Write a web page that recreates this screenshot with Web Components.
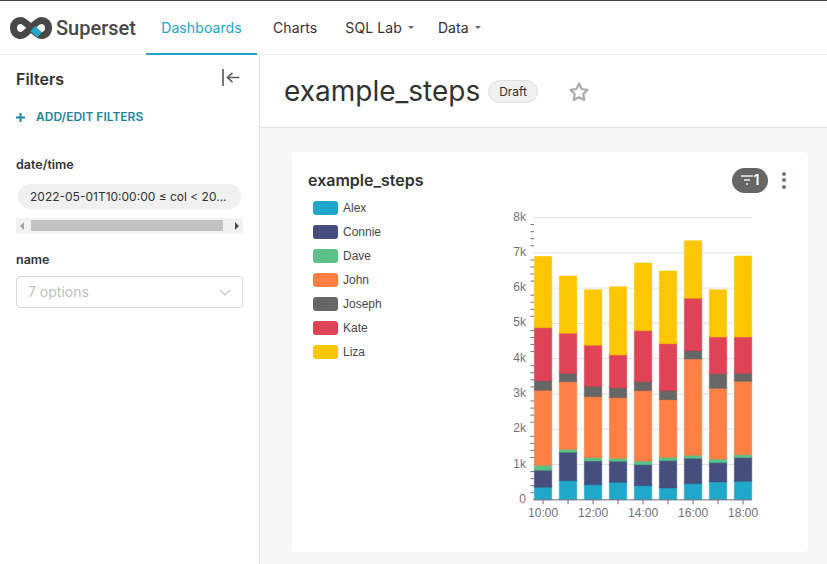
<!DOCTYPE html>
<html lang="en"><head><meta charset="utf-8"><title>example_steps</title>
<style>
html,body{margin:0;padding:0;width:827px;height:564px;overflow:hidden;background:#fff;font-family:Inter,"Liberation Sans",sans-serif;color:#323232}
</style></head><body>
<ss-app>
  <ss-header slot="header">
    <ss-nav active>Dashboards</ss-nav>
    <ss-nav>Charts</ss-nav>
    <ss-nav caret>SQL Lab</ss-nav>
    <ss-nav caret>Data</ss-nav>
  </ss-header>
  <ss-sidebar slot="side"></ss-sidebar>
  <ss-dash-header slot="head">example_steps</ss-dash-header>
  <ss-card slot="main" title-text="example_steps">
    <ss-legend slot="legend"></ss-legend>
    <ss-bars slot="chart"></ss-bars>
  </ss-card>
</ss-app>
<script>
function def(name, html, init){
  customElements.define(name, class extends HTMLElement{
    constructor(){super();this.attachShadow({mode:'open'}).innerHTML=html;}
    connectedCallback(){ if(init) init.call(this,this.shadowRoot); }
  });
}
def('ss-app',`<style>
:host{display:grid;grid-template-columns:260px 1fr;grid-template-rows:55px 73px 1fr;width:827px;height:564px;overflow:hidden}
.h{grid-column:1/3}.s{grid-row:2/4}.main{background:#f7f7f7;padding:24px 19px 12px 32px;min-height:0;display:flex}
::slotted([slot=main]){flex:1}
</style><div class="h"><slot name="header"></slot></div><div class="s"><slot name="side"></slot></div><div><slot name="head"></slot></div><div class="main"><slot name="main"></slot></div>`);

def('ss-header',`<style>
:host{display:flex;height:55px;box-sizing:border-box;border-top:1px solid #484848;border-bottom:1px solid #f0f0f0;background:#fff}
.logo{width:146px;display:flex;align-items:center;flex:none;padding-left:10px;box-sizing:border-box;gap:4px;height:53px}
.logo span{font:500 20px Roboto,sans-serif;color:#484848;position:relative;top:.5px}
nav{display:flex}
</style><div class="logo"><svg width="42" height="22" viewBox="0 0 42 22" fill="none"><path d="M11 3.500C6.500 3.500 3.500 6.500 3.500 11s3 7.500 7.500 7.500c6 0 14-15 20-15 4.500 0 7.500 3 7.500 7.500s-3 7.500-7.500 7.500c-6 0-14-15-20-15Z" stroke="#484848" stroke-width="7"/><path d="M23 11.500l6.500 6.500" stroke="#20a7c9" stroke-width="7"/></svg><span>Superset</span></div><nav><slot></slot></nav>`);

def('ss-nav',`<style>
:host{display:flex;align-items:center;height:54px;font:400 14px/20px Inter,sans-serif;color:#323232;letter-spacing:.1px;box-sizing:border-box}
:host([active]){color:#20a7c9;width:111px;justify-content:center;border-bottom:2px solid #20a7c9;height:54px;margin-bottom:-1px;padding-top:2px}
:host(:not([active])){margin-left:16px;height:53px}
.c{display:none;width:0;height:0;border:3px solid transparent;border-top:3.500px solid #666;border-bottom:0;margin-left:6px}
:host([caret]) .c{display:block}
:host(:nth-of-type(3)){margin-left:28px}
:host(:nth-of-type(4)){margin-left:24px}
</style><slot></slot><i class="c"></i>`);

def('ss-sidebar',`<style>
:host{display:block;height:509px;box-sizing:border-box;border-right:1px solid #e0e0e0;width:260px;padding:0 16px;background:#fff}
.top{display:flex;justify-content:space-between;align-items:center;height:50px}
h2{margin:0 0 2px;font:600 16px/22px Inter,sans-serif;color:#323232}
.add{display:flex;align-items:center;gap:11px;font:600 12px/16px Inter,sans-serif;color:#1985a0;height:24px}
label{display:block;font:600 12.500px/16px Inter,sans-serif;color:#323232;}
.l1{margin-top:28px}
.pill{margin:11px 2px 0;height:25px;border-radius:12.500px;background:#f0f0f0;font:400 12px/25px Inter,sans-serif;color:#323232;padding-left:12px;white-space:nowrap}
.sb{display:flex;align-items:center;height:15px;margin-top:9px;background:#f1f1f1;padding:0 4px;box-sizing:border-box;position:relative}
.thumb{flex:none;width:192px;height:11px;background:#c1c1c1;margin:0 auto 0 7px}
.al{width:0;height:0;border:4px solid transparent;border-left:0;border-right:4px solid #a3a3a3}
.ar{width:0;height:0;border:4px solid transparent;border-right:0;border-left:4px solid #505050}
.l2{margin-top:19px}
.sel{display:flex;align-items:center;justify-content:space-between;margin-top:8px;height:32px;box-sizing:border-box;border:1px solid #d9d9d9;border-radius:4px;padding:0 11px;font:400 14px/20px Inter,sans-serif;color:#bfbfbf}
</style>
<div class="top"><h2>Filters</h2><svg width="18" height="17" viewBox="0 0 18 17" fill="none" stroke="#5f5f5f" style="margin:0 3px 6px 0"><path d="M1 0v17" stroke-width="1.700"/><path d="M17.500 8.500H5.500M10.500 3.800L5.500 8.500l5 4.700" stroke-width="1.700"/></svg></div>
<div class="add"><svg width="9" height="9" viewBox="0 0 9 9" stroke="#1985a0" stroke-width="1.900"><path d="M4.500 0v9M0 4.500h9"/></svg><span>ADD/EDIT FILTERS</span></div>
<label class="l1">date/time</label>
<div class="pill">2022-05-01T10:00:00 ≤ col &lt; 20...</div>
<div class="sb"><i class="al"></i><i class="thumb"></i><i class="ar"></i></div>
<label class="l2">name</label>
<div class="sel"><span>7 options</span><svg width="12" height="7" viewBox="0 0 12 7" fill="none" stroke="#bfbfbf" stroke-width="1.100"><path d="M.8.800L6 6l5.200-5.200"/></svg></div>`);

def('ss-dash-header',`<style>
:host{display:flex;align-items:center;height:73px;box-sizing:border-box;border-bottom:1px solid #e0e0e0;background:#fff;padding:0 0 1px 24px}
h1{margin:0;font:400 28px/40px Inter,sans-serif;color:#323232}
.tag{margin:1px 0 0 8px;height:23px;box-sizing:border-box;border:1px solid #e0e0e0;background:#f0f0f0;border-radius:12px;padding:0 10px;font:400 12px/21px Inter,sans-serif;color:#323232}
svg{margin:2px 0 0 31px}
</style><h1><slot></slot></h1><span class="tag">Draft</span><svg width="20" height="19" viewBox="0 0 20 19" fill="none" stroke="#adadad" stroke-width="2.200" stroke-linejoin="round"><path d="M10 1.500l2.600 5.500 5.900.9-4.200 4.100 1 6L10 15.200 4.700 18l1-6-4.200-4.100 5.900-.9z"/></svg>`);

def('ss-card',`<style>
:host{display:flex;flex-direction:column;background:#fff;border-radius:4px;overflow:hidden}
.hd{display:flex;align-items:center;height:53px;padding:3px 0 0 16px;box-sizing:border-box}
h3{margin:0;flex:1;font:600 16px/22px Inter,sans-serif;color:#323232}
.f{display:flex;align-items:center;justify-content:center;gap:1px;width:36px;height:25px;border-radius:12.500px;background:#666;color:#fff;font:600 14px/16px Inter,sans-serif}
.k{width:4px;margin:0 22px 0 14px;display:flex;flex-direction:column;gap:2.500px}
.k i{display:block;width:4px;height:4px;border-radius:50%;background:#6b7680}
.bd{display:flex;flex:1;min-height:0}
</style><div class="hd"><h3></h3><span class="f"><svg width="12" height="10" viewBox="0 0 12 10" stroke="#fff" stroke-width="1.300" opacity=".9"><path d="M0 1h12M3 5h6M5 9h2"/></svg><span>1</span></span><span class="k"><i></i><i></i><i></i></span></div><div class="bd"><slot name="legend"></slot><slot name="chart"></slot></div>`,
function(r){r.querySelector('h3').textContent=this.getAttribute('title-text');});

const SER=[['Alex','#1fa8c9'],['Connie','#454e7c'],['Dave','#5ac189'],['John','#ff7f44'],['Joseph','#666666'],['Kate','#e04355'],['Liza','#fcc700']];
def('ss-legend',`<style>
:host{display:block;width:208px;box-sizing:border-box;padding-left:21px;margin-top:-4px;font:400 12px/14px "Liberation Sans",sans-serif;color:#484848}
.r{display:flex;align-items:center;gap:5px;height:14px;margin-bottom:10px}
i{display:block;width:25px;height:14px;border-radius:3px}
</style><div id="l"></div>`,function(r){
  r.getElementById('l').innerHTML=SER.map(s=>`<div class="r"><i style="background:${s[1]}"></i><span>${s[0]}</span></div>`).join('');
});

const B=[
 [257.3,327.7,380.7,390.3,465.3,470.3,487.3],
 [277,333.3,373.3,381.7,449.3,452.3,480.7],
 [290.7,345.3,386.3,396.7,457.7,461,484.7],
 [287.7,355,387.7,397.7,458.3,461.3,482.3],
 [264,330.7,381.7,390.7,461,464.7,485.7],
 [272,343.7,390.7,399.7,457.3,460.7,488],
 [241.7,298.3,350.7,359,455.3,458.3,483.7],
 [290.7,337,373.7,388.3,459,462.7,482],
 [257,337,373.3,381.3,454.7,457.7,481.3]];
def('ss-bars',`<style>:host{display:block;width:300px;height:324px}svg{display:block;font:12px "Liberation Sans",sans-serif}text{fill:#6e7079}</style><svg id="s" width="300" height="324" viewBox="500 205 300 324"></svg>`,function(r){
  const y0=499.8,k=35.28;let o='';
  for(let i=1;i<=8;i++){const y=y0-i*k;o+=`<path d="M533 ${y}H752" stroke="#e0e0e8" stroke-width="1"/>`;}
  for(let i=0;i<=8;i++){const y=y0-i*k;o+=`<text x="526" y="${y+3}" text-anchor="end">${i?i+'k':'0'}</text>`;}
  for(let i=0;i<40;i++){if(i%5==0)continue;const y=(y0-i*k/5).toFixed(1);o+=`<path d="M530.500 ${y}H534" stroke="#6e7079"/>`;}
  B.forEach((b,n)=>{const x=534.3+n*25,w=17.5;
    const cuts=[y0,...b.slice().reverse()];
    for(let s=0;s<7;s++){const top=cuts[s+1],bot=cuts[s];
      o+=`<rect x="${x}" y="${top-1}" width="${w}" height="${bot-top+1}" fill="${SER[s][1]}" stroke="${SER[s][1]}" stroke-opacity=".45" stroke-width="1"/>`;}
    o+=`<path d="M${x+8.75} ${y0}v4.500" stroke="#6e7079"/>`;
    if(n%2==0)o+=`<text x="${x+8.75}" y="517" text-anchor="middle">${10+n}:00</text>`;
  });
  o+=`<path d="M533 ${y0}H752" stroke="#6e7079"/>`;
  r.getElementById('s').innerHTML=o;
});
</script>
</body></html>
